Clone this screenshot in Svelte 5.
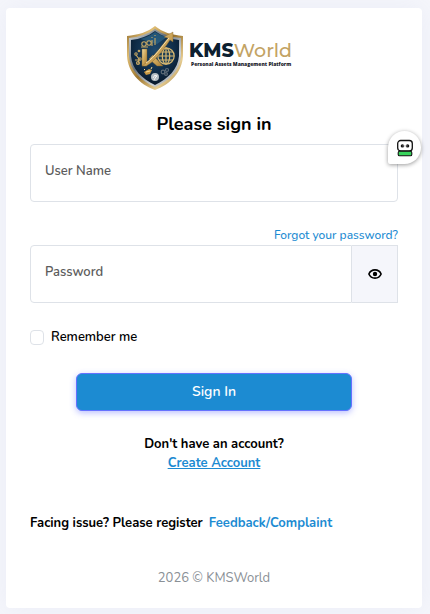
<script>
  let username = $state('');
  let password = $state('');
  let remember = $state(false);
  let visible = $state(false);
</script>

<div class="page">
  <main class="card">
    <svg class="logo" viewBox="0 0 180 68" role="img" aria-label="KMSWorld Personal Assets Management Platform">
      <defs>
        <linearGradient id="gold" x1="0" y1="0" x2="1" y2="1">
          <stop offset="0" stop-color="#8d6828" />
          <stop offset=".25" stop-color="#dfbd74" />
          <stop offset=".5" stop-color="#9c752e" />
          <stop offset=".75" stop-color="#e8ce92" />
          <stop offset="1" stop-color="#86632a" />
        </linearGradient>
        <linearGradient id="silver" x1="0" y1="0" x2="1" y2="1">
          <stop offset="0" stop-color="#d7dce0" />
          <stop offset=".4" stop-color="#68737e" />
          <stop offset=".7" stop-color="#cfd4d8" />
          <stop offset="1" stop-color="#727a82" />
        </linearGradient>
        <radialGradient id="navy" cx=".5" cy=".35" r=".65">
          <stop offset="0" stop-color="#1d486c" />
          <stop offset=".6" stop-color="#102e4a" />
          <stop offset="1" stop-color="#081829" />
        </radialGradient>
        <linearGradient id="letter" x1="0" y1="0" x2="1" y2="1">
          <stop offset="0" stop-color="#f2dca3" />
          <stop offset=".5" stop-color="#cda65a" />
          <stop offset="1" stop-color="#a87d36" />
        </linearGradient>
      </defs>
      <path d="M31 2C24 8 14 11 3 12V32C4 48 15 60 31 66C47 60 58 48 59 32V12C48 11 38 8 31 2Z" fill="url(#gold)" />
      <path d="M31 5C24 10 15 13 5 14V32C6 46 17 57 31 63C45 57 56 46 57 32V14C47 13 38 10 31 5Z" fill="url(#silver)" />
      <path d="M31 7C24 12 16 15 7 16V32C8 45 18 55 31 61C44 55 54 45 55 32V16C46 15 38 12 31 7Z" fill="url(#navy)" />
      <path d="M31 8C25 12 21 14 16 15L33 20L43 13C38 12 35 10 31 8Z" fill="#36789b" opacity=".5" />
      <g fill="none" stroke="#c9a963" stroke-width="1.1">
        <circle cx="20" cy="20" r="2.2" />
        <circle cx="25" cy="19" r="2.2" />
        <path d="M17 23H24M28 16V22M31 14V21M28 13V14M31 11V12M12 31L15 35L14 40M11 36H16" />
        <circle cx="12" cy="30" r="1.2" />
        <circle cx="16" cy="35" r="1.2" />
        <circle cx="14" cy="39" r="1.5" />
        <circle cx="15" cy="27" r=".8" />
      </g>
      <g fill="none" stroke="#d8b871" stroke-width="1.2">
        <circle cx="42" cy="32" r="8.2" fill="#193b54" />
        <ellipse cx="42" cy="32" rx="3.7" ry="8.2" />
        <path d="M34 32H50M35 28H49M35 36H49M42 24V40" />
      </g>
      <path d="M18 25H23V42H18Z" fill="url(#letter)" stroke="#80612c" stroke-width=".4" />
      <path d="M29 31L39 42H33L25 35Z" fill="url(#letter)" stroke="#80612c" stroke-width=".4" />
      <path d="M18 42C27 36 36 24 44 14L40 13L49 8L49 18L46 16C38 28 30 38 22 42Z" fill="url(#letter)" stroke="#80612c" stroke-width=".4" />
      <path d="M22 39C31 33 38 22 45 14" fill="none" stroke="#fff0c5" stroke-width=".8" />
      <path d="M20 48L25 45L28 46L26 50L22 51Z" fill="#c59642" />
      <path d="M22 48L26 47M20 46L21 45M27 45L28 43" stroke="#f8dc96" />
      <circle cx="31" cy="53" r="4" fill="#b4bdc2" />
      <path d="M29 54L31 51L33 53M30 56L33 51" fill="none" stroke="#f5f5f5" />
      <g fill="none" stroke="#5e6c78" stroke-width="1.2">
        <circle cx="39" cy="48" r="1.8" />
        <circle cx="43" cy="46" r="1.5" />
        <circle cx="42" cy="50" r="1.4" />
      </g>
      <text class="brand" x="65" y="33"><tspan class="kms">KMS</tspan><tspan class="world">World</tspan></text>
      <text class="tagline" x="67" y="42">Personal Assets Management Platform</text>
    </svg>

    <h1>Please sign in</h1>

    <form onsubmit={(event) => event.preventDefault()}>
      <div class="field user">
        <input id="username" type="text" autocomplete="username" bind:value={username} />
        <label for="username" class:filled={username}>User Name</label>
        <button class="assistant" type="button" aria-label="Fill sign-in details">
          <svg viewBox="0 0 18 18" aria-hidden="true">
            <rect x="1.700" y="1.500" width="14.600" height="10.500" rx="3" fill="#fff" stroke="#111" stroke-width="1.3" />
            <circle cx="6.4" cy="6.9" r="1.7" fill="#111" />
            <circle cx="11.6" cy="6.9" r="1.7" fill="#111" />
            <path d="M6.4 6.9H11.6" stroke="#aaa" stroke-width=".7" />
            <rect x="2.200" y="12.3" width="13.600" height="4.500" rx="1.4" fill="#38d45c" stroke="#111" stroke-width="1.1" />
          </svg>
        </button>
      </div>

      <a class="forgot" href="#forgot">Forgot your password?</a>
      <div class="field password">
        <input id="password" type={visible ? 'text' : 'password'} autocomplete="current-password" bind:value={password} />
        <label for="password" class:filled={password}>Password</label>
        <button class="eye" type="button" aria-label="Show password" aria-pressed={visible} onclick={() => (visible = !visible)}>
          <svg viewBox="0 0 14 10" aria-hidden="true">
            <path d="M.9 5C2 2.300 4.300 .9 7 .9S12 2.300 13.100 5C12 7.700 9.700 9.100 7 9.100S2 7.700 .9 5Z" fill="none" stroke="#000" stroke-width="1.6" />
            <circle cx="7" cy="5" r="2.200" />
          </svg>
        </button>
      </div>

      <label class="remember"><input type="checkbox" bind:checked={remember} />Remember me</label>
      <button class="submit" type="submit">Sign In</button>
    </form>

    <p class="account">Don't have an account?<a href="#create">Create Account</a></p>
    <p class="issue">Facing issue? Please register <a href="#feedback">Feedback/Complaint</a></p>
    <footer>2026 © KMSWorld</footer>
  </main>
</div>

<style>
  :global(body) { margin: 0; background: #f5f6fb; }
  * { box-sizing: border-box; }
  .page {
    padding: 8px 8px 6px 6px;
    font-family: Nunito, Lato, sans-serif;
    font-size: 13px;
    line-height: 20px;
    color: #000;
  }
  .card {
    padding: 16px 24px 20px;
    border-radius: 4px;
    background: #fff;
    box-shadow: 0 0 24px rgba(150, 160, 210, .1);
  }
  .logo { display: block; width: 180px; height: 68px; margin: 0 auto; }
  .brand { font-family: Montserrat, Inter, sans-serif; font-size: 19px; }
  .kms { font-weight: 800; fill: #0d2030; }
  .world { font-weight: 500; fill: #c3a364; }
  .tagline { font-family: "Open Sans", sans-serif; font-size: 5px; font-weight: 800; fill: #182029; }
  h1 { margin: 20px 0 8px; font-size: 18px; line-height: 24px; font-weight: 700; text-align: center; }
  button, input { font: inherit; }
  a { color: #1c8bd2; text-decoration: none; }
  form { display: flex; flex-direction: column; }
  .field { position: relative; display: flex; height: 58px; }
  .field > input {
    flex: 1;
    min-width: 0;
    padding: 16px 14px 8px;
    border: 1px solid #dee2e8;
    border-radius: 4px;
    background: #fff;
    outline: none;
  }
  .field > label { position: absolute; top: 17px; left: 15px; color: #5c5c5c; font-weight: 600; pointer-events: none; }
  .field > label.filled { top: 1px; font-size: 11px; }
  .assistant {
    position: absolute;
    top: -13px;
    right: -23px;
    display: grid;
    place-items: center;
    width: 33px;
    height: 33px;
    padding: 0;
    border: 0;
    border-radius: 17px 17px 17px 2px;
    background: #fff;
    box-shadow: 0 1px 4px rgba(0, 0, 0, .4);
  }
  .assistant svg { width: 18px; height: 18px; }
  .forgot { align-self: flex-end; margin-top: 23px; font-size: 12px; font-weight: 500; }
  .field.password > input { border-radius: 4px 0 0 4px; }
  .eye {
    display: grid;
    place-items: center;
    width: 46px;
    padding: 0;
    border: 1px solid #dee2e8;
    border-left: 0;
    background: #f5f6fb;
  }
  .eye svg { width: 14px; height: 10px; }
  .remember { display: flex; align-items: center; align-self: flex-start; gap: 7px; margin-top: 24px; font-weight: 600; }
  .remember input {
    appearance: none;
    width: 14px;
    height: 15px;
    margin: 0;
    border: 1px solid #dee2e8;
    border-radius: 4px;
    background: #fff;
  }
  .remember input:checked { background: #1c8bd2; }
  .submit {
    width: 75%;
    height: 38px;
    margin: 26px auto 0;
    padding: 0;
    border: 1px solid #6571ff;
    border-radius: 6px;
    background: #1c8bd2;
    color: #fff;
    font-size: 14px;
    font-weight: 600;
    box-shadow: 0 2px 6px rgba(101, 113, 255, .45);
  }
  p { margin: 0; font-weight: 700; }
  .account { display: flex; flex-direction: column; align-items: center; margin-top: 24px; line-height: 19px; }
  .account a { text-decoration: underline; }
  .issue { display: flex; flex-wrap: wrap; column-gap: 6px; margin-top: 40px; }
  footer { margin-top: 35px; color: #8a9096; text-align: center; }
</style>
